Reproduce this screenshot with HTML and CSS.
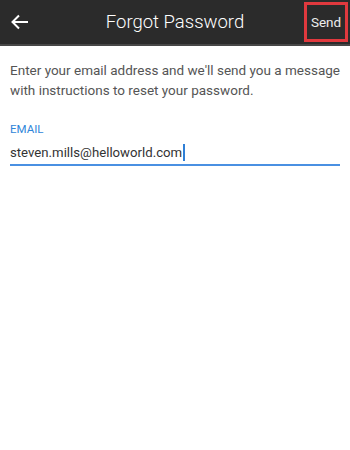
FILE: index.html
```html
<!DOCTYPE html>
<html>
<head>
<meta charset="utf-8">
<link rel="stylesheet" href="styles.css">
</head>
<body>
<header class="bar">
  <button class="back" aria-label="Back">
    <svg width="20" height="16" viewBox="0 0 20 16"><path d="M18 8H2.5M9 1.5L2.5 8L9 14.5" fill="none" stroke="#fff" stroke-width="2"/></svg>
  </button>
  <h1 class="title">Forgot Password</h1>
  <button class="send">Send</button>
</header>
<main class="content">
  <p class="intro">Enter your email address and we'll send you a message with instructions to reset your password.</p>
  <label class="label">EMAIL</label>
  <div class="field"><span class="value">steven.mills@helloworld.com</span><span class="cursor"></span></div>
</main>
</body>
</html>
```
FILE: styles.css
```css
* { box-sizing: border-box; }
body { margin: 0; font-family: Roboto, "Liberation Sans", sans-serif; background: #fff; }
.bar {
  height: 46px;
  background: #2b2b2b;
  border-bottom: 2px solid #474747;
  display: flex;
  align-items: center;
}
.back {
  background: none; border: 0; padding: 0;
  width: 40px; height: 44px;
  display: flex; align-items: center; justify-content: center;
}
.title {
  flex: 1; margin: 0; text-align: center;
  color: #fff; font-weight: 300; font-size: 18.5px;
  padding-left: 6px;
}
.send {
  background: none; color: #ededed;
  font-family: inherit; font-size: 13.5px; font-weight: 400;
  border: 3px solid #e0393e;
  width: 44px; height: 40px;
  margin-right: 2px; padding: 0;
}
.content { padding: 14px 10px 0; }
.intro { margin: 0 -10px 0 0; font-size: 13.5px; line-height: 20px; color: #555; }
.label { display: block; margin-top: 22px; font-size: 11.5px; color: #2f86d9; }
.field {
  margin-top: 8px; width: 330px; height: 22px;
  border-bottom: 2px solid #4a90e2;
  display: flex; align-items: flex-start;
}
.value { font-size: 13.2px; color: #333; line-height: 18px; }
.cursor { width: 2px; height: 17px; background: #2f7fd6; margin-left: 1px; }
```
